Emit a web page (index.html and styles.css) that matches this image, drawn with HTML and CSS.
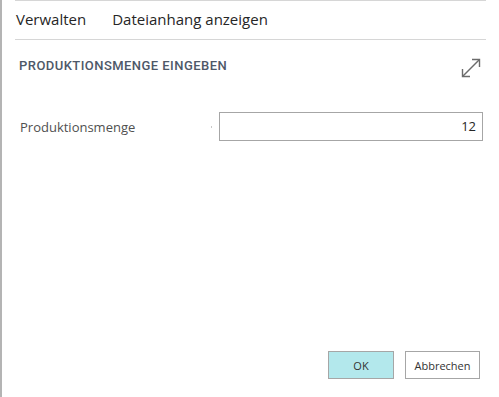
FILE: index.html
```html
<!DOCTYPE html>
<html lang="de">
<head>
<meta charset="utf-8">
<link rel="stylesheet" href="styles.css">
</head>
<body>
<div class="frame">
  <nav class="menu">
    <span class="menu-item">Verwalten</span>
    <span class="menu-item">Dateianhang anzeigen</span>
  </nav>
  <div class="header">
    <h1 class="title">PRODUKTIONSMENGE EINGEBEN</h1>
    <svg class="expand" width="22" height="22" viewBox="0 0 22 22" fill="none" stroke="#6b6b6b" stroke-width="1.4">
      <path d="M2.5 19.5 L19.5 2.5"/>
      <path d="M12 2.5 H19.5 V10"/>
      <path d="M2.5 12 V19.5 H10"/>
    </svg>
  </div>
  <div class="field">
    <label class="label">Produktionsmenge</label>
    <span class="dot"></span>
    <div class="input">12</div>
  </div>
  <div class="spacer"></div>
  <div class="actions">
    <button class="btn btn-ok">OK</button>
    <button class="btn btn-cancel">Abbrechen</button>
  </div>
</div>
</body>
</html>
```
FILE: styles.css
```css
html, body {
  margin: 0;
  padding: 0;
  background: #fff;
}
body {
  width: 499px;
  height: 397px;
  overflow: hidden;
  font-family: "Open Sans", "Liberation Sans", sans-serif;
}
.frame {
  box-sizing: border-box;
  height: 397px;
  border-left: 2px solid #b4b4b4;
  padding-left: 13px;
  padding-right: 13px;
  display: flex;
  flex-direction: column;
}
.menu {
  border-top: 1px solid #d6d6d6;
  border-bottom: 1px solid #d6d6d6;
  height: 38px;
  display: flex;
  align-items: center;
  gap: 26px;
  padding-left: 1px;
}
.menu-item {
  font-size: 15px;
  color: #262626;
  padding-bottom: 2px;
}
.header {
  display: flex;
  justify-content: space-between;
  align-items: center;
  padding: 17px 4px 0 4px;
}
.title {
  margin: 0;
  font-family: "Roboto", "Liberation Sans", sans-serif;
  font-weight: 500;
  font-size: 13px;
  color: #4e5868;
  letter-spacing: 0.45px;
  padding-bottom: 6px;
}
.field {
  display: flex;
  align-items: center;
  margin-top: 33px;
  padding-left: 5px;
}
.label {
  font-size: 13px;
  color: #505050;
  width: 191px;
}
.dot {
  width: 1px;
  height: 2px;
  background: #c8c8c8;
  margin-right: 7px;
}
.input {
  box-sizing: border-box;
  width: 264px;
  height: 29px;
  border: 1px solid #a6a6a6;
  text-align: right;
  font-size: 13px;
  line-height: 27px;
  padding-right: 6px;
  color: #262626;
}
.spacer {
  flex: 1;
}
.actions {
  display: flex;
  justify-content: flex-end;
  gap: 11px;
  padding-right: 6px;
  margin-bottom: 18px;
}
.btn {
  box-sizing: border-box;
  height: 28px;
  border: 1px solid #a6a6a6;
  background: #fff;
  font-family: "Open Sans", "Liberation Sans", sans-serif;
  font-size: 11px;
  color: #333;
  padding: 0;
}
.btn-ok {
  width: 66px;
  background: #b3e8ec;
}
.btn-cancel {
  width: 75px;
}
```
